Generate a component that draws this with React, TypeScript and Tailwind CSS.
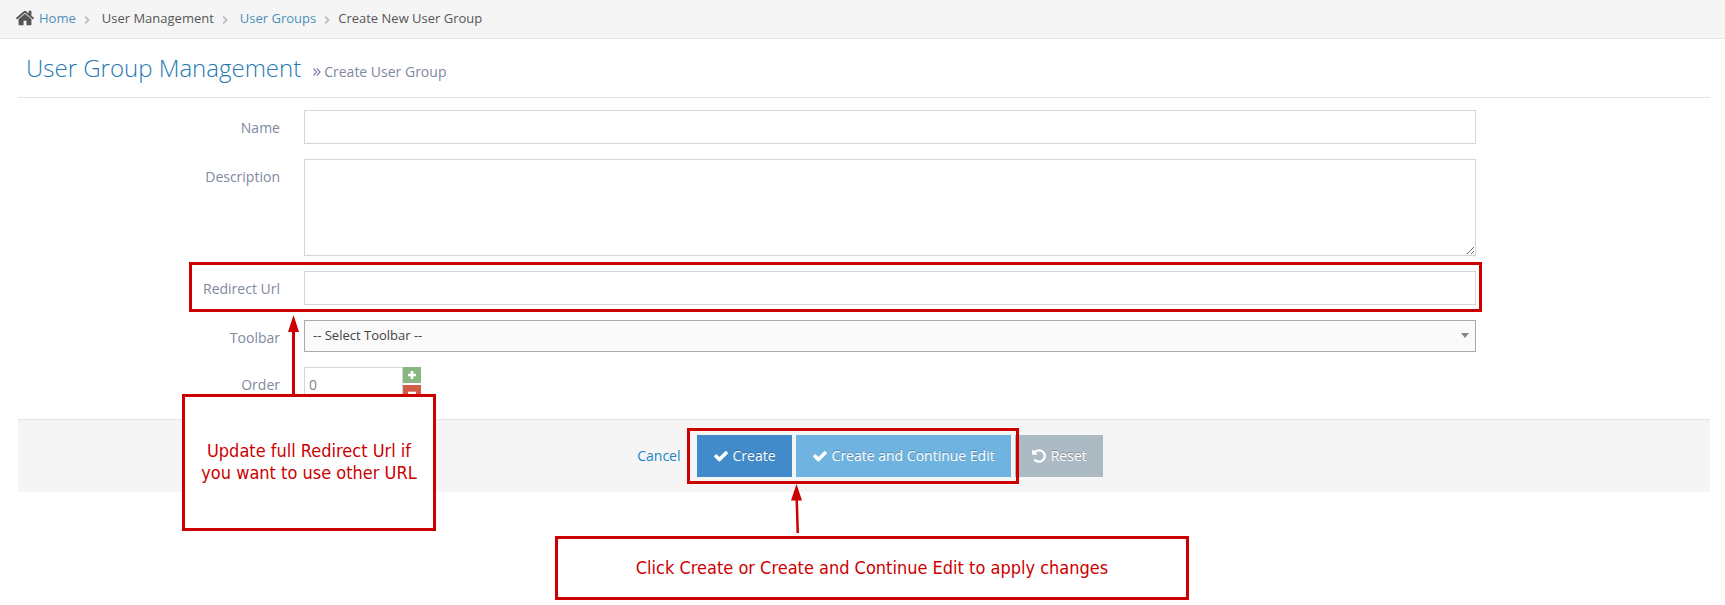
import type { ReactNode } from "react";

const paths = {
  home: "M1472 992v480q0 26-19 45t-45 19h-384v-384h-256v384h-384q-26 0-45-19t-19-45v-480q0-1 .5-3t.5-3l575-474 575 474q1 2 1 6zm223-69l-62 74q-8 9-21 11h-3q-13 0-21-7l-692-577-692 577q-12 8-24 7-13-2-21-11l-62-74q-8-10-7-23.5t11-21.5l719-599q32-26 76-26t76 26l244 204v-195q0-14 9-23t23-9h192q14 0 23 9t9 23v408l219 182q10 8 11 21.5t-7 23.5z",
  check:
    "M1671 566q0 40-28 68l-724 724-136 136q-28 28-68 28t-68-28l-136-136-362-362q-28-28-28-68t28-68l136-136q28-28 68-28t68 28l294 295 656-657q28-28 68-28t68 28l136 136q28 28 28 68z",
  undo: "M1664 896q0 156-61 298t-164 245-245 164-298 61q-172 0-327-72.5t-264-204.5q-7-10-6.5-22.5t8.5-20.5l137-138q10-9 25-9 16 2 23 12 73 95 179 147t225 52q104 0 198.5-40.5t163.5-109.5 109.5-163.5 40.5-198.5-40.5-198.5-109.5-163.5-163.5-109.5-198.5-40.5q-98 0-188 35.5t-160 101.5l137 138q31 30 14 69-17 40-59 40h-448q-26 0-45-19t-19-45v-448q0-42 40-59 39-17 69 14l130 129q107-101 244.5-156.5t284.5-55.5q156 0 298 61t245 164 164 245 61 298z",
};

function Icon({ name, className }: { name: keyof typeof paths; className: string }) {
  return (
    <svg viewBox="0 0 1792 1792" fill="currentColor" className={className} aria-hidden="true">
      <path d={paths[name]} />
    </svg>
  );
}

function Separator() {
  return (
    <svg
      viewBox="0 0 6 8"
      className="mx-2 mt-1 h-2 w-1.5 text-[#b2b6bf]"
      fill="none"
      stroke="currentColor"
      strokeWidth="1.5"
      aria-hidden="true"
    >
      <path d="M1.200.600L4.600 4 1.200 7.400" />
    </svg>
  );
}

function Field({ id, label, children }: { id: string; label: string; children: ReactNode }) {
  return (
    <div className="flex">
      <label htmlFor={id} className="w-1/6 px-3 pt-2 text-right text-[#8089a0]">
        {label}
      </label>
      <div className="flex w-[69.7%] px-3">{children}</div>
    </div>
  );
}

function Button({ className, icon, children }: { className: string; icon: "check" | "undo"; children: ReactNode }) {
  return (
    <button
      type="button"
      className={`flex h-[42px] items-center gap-1 px-4 text-white [text-shadow:0_-1px_0_rgba(0,0,0,0.25)] ${className}`}
    >
      <Icon name={icon} className="size-4" />
      {children}
    </button>
  );
}

export default function App() {
  return (
    <div className="relative min-h-screen bg-white font-['Open_Sans',sans-serif] text-sm text-[#393939]">
      <nav className="flex h-[39px] items-center border-b border-[#e5e5e5] bg-[#f5f5f5] px-[15px] pb-0.5 text-[13px] text-[#555]">
        <Icon name="home" className="mr-1 size-5" />
        <a href="#home" className="text-[#4c8fbd]">
          Home
        </a>
        <Separator />
        <span className="ml-1">User Management</span>
        <Separator />
        <a href="#groups" className="ml-1 text-[#4c8fbd]">
          User Groups
        </a>
        <Separator />
        <span>Create New User Group</span>
      </nav>

      <main className="pr-[15px] pl-[18px]">
        <header className="flex h-[59px] items-baseline border-b border-[#e2e2e2] px-2 pt-[13px]">
          <h1 className="text-2xl font-light text-[#2679b5]">User Group Management</h1>
          <p className="ml-3 flex items-center text-[#8089a0]">
            <svg viewBox="0 0 8 10" className="mr-[3px] h-[10px] w-2" fill="none" stroke="currentColor" strokeWidth="1.3">
              <path d="M.5 1.500L3.500 5 .5 8.500M4 1.500L7 5 4 8.500" />
            </svg>
            Create User Group
          </p>
        </header>

        <form>
          <div className="-mx-3 flex flex-col gap-[15px] pt-3">
            <Field id="name" label="Name">
              <input id="name" className="h-[34px] w-full border border-[#d5d5d5] px-1" />
            </Field>
            <Field id="description" label="Description">
              <textarea id="description" className="h-[97px] w-full resize border border-[#d5d5d5] px-1" />
            </Field>
            <Field id="url" label="Redirect Url">
              <input id="url" className="h-[34px] w-full border border-[#d5d5d5] px-1" />
            </Field>
            <Field id="toolbar" label="Toolbar">
              <div className="relative h-8 w-full">
                <select
                  id="toolbar"
                  className="h-8 w-full appearance-none border border-[#aaa] bg-[#fafafa] px-2 pb-0.5 text-[13px] text-[#444]"
                >
                  <option>-- Select Toolbar --</option>
                </select>
                <svg viewBox="0 0 8 5" className="pointer-events-none absolute top-[13px] right-[7px] h-[5px] w-2" fill="#888">
                  <path d="M0 0h8L4 5z" />
                </svg>
              </div>
            </Field>
            <Field id="order" label="Order">
              <input id="order" defaultValue="0" className="h-[34px] w-[99px] border border-[#d5d5d5] px-1 text-[#858585]" />
              <div className="flex flex-col gap-[2px]">
                <button type="button" aria-label="Increase" className="flex h-4 w-[18px] items-center justify-center bg-[#87b87f] text-white">
                  <svg viewBox="0 0 8 8" className="size-2" fill="currentColor">
                    <path d="M2.700 0h2.600v2.700H8v2.600H5.300V8H2.700V5.300H0V2.700h2.700z" />
                  </svg>
                </button>
                <button type="button" aria-label="Decrease" className="flex h-4 w-[18px] items-center justify-center bg-[#d15b47] text-white">
                  <svg viewBox="0 0 8 8" className="size-2" fill="currentColor">
                    <path d="M0 2.700h8v2.600H0z" />
                  </svg>
                </button>
              </div>
            </Field>
          </div>

          <div className="mt-[18px] flex h-[73px] justify-center gap-1 border-t border-[#e5e5e5] bg-[#f5f5f5] pt-[15px]">
            <a href="#cancel" className="flex h-[42px] items-center px-3 text-[#2283c5]">
              Cancel
            </a>
            <Button icon="check" className="bg-[#428bca]">
              Create
            </Button>
            <Button icon="check" className="bg-[#6fb3e0]">
              Create and Continue Edit
            </Button>
            <Button icon="undo" className="bg-[#abbac3]">
              Reset
            </Button>
          </div>
        </form>
      </main>

      {/* annotations */}
      <div className="pointer-events-none font-['DejaVu_Sans_Condensed','DejaVu_Sans',sans-serif] text-lg leading-[22px] text-[#c00]">
        <div className="absolute top-[262px] right-[243px] left-[189px] h-[50px] border-3 border-[#c00]" />
        <svg viewBox="0 0 12 80" className="absolute top-[315px] left-[288px] h-20 w-3" fill="currentColor">
          <path d="M5.5 0L11 17H7v63H4V17H0z" />
        </svg>
        <div className="absolute top-[394px] left-[182px] flex h-[137px] w-[254px] items-center justify-center border-3 border-[#c00] bg-white pb-0.5 text-center">
          Update full Redirect Url if
          <br />
          you want to use other URL
        </div>
        <div className="absolute top-[428px] left-[687px] h-[56px] w-[332px] border-3 border-[#c00]" />
        <svg viewBox="0 0 12 49" className="absolute top-[484px] left-[791px] h-[49px] w-3" fill="currentColor">
          <path d="M5.5 0L11 16.500H7L8 49H5.500L4.500 16.500H0z" />
        </svg>
        <div className="absolute top-[536px] left-[555px] flex h-16 w-[634px] items-center justify-center border-3 border-[#c00] bg-white">
          Click Create or Create and Continue Edit to apply changes
        </div>
      </div>
    </div>
  );
}
